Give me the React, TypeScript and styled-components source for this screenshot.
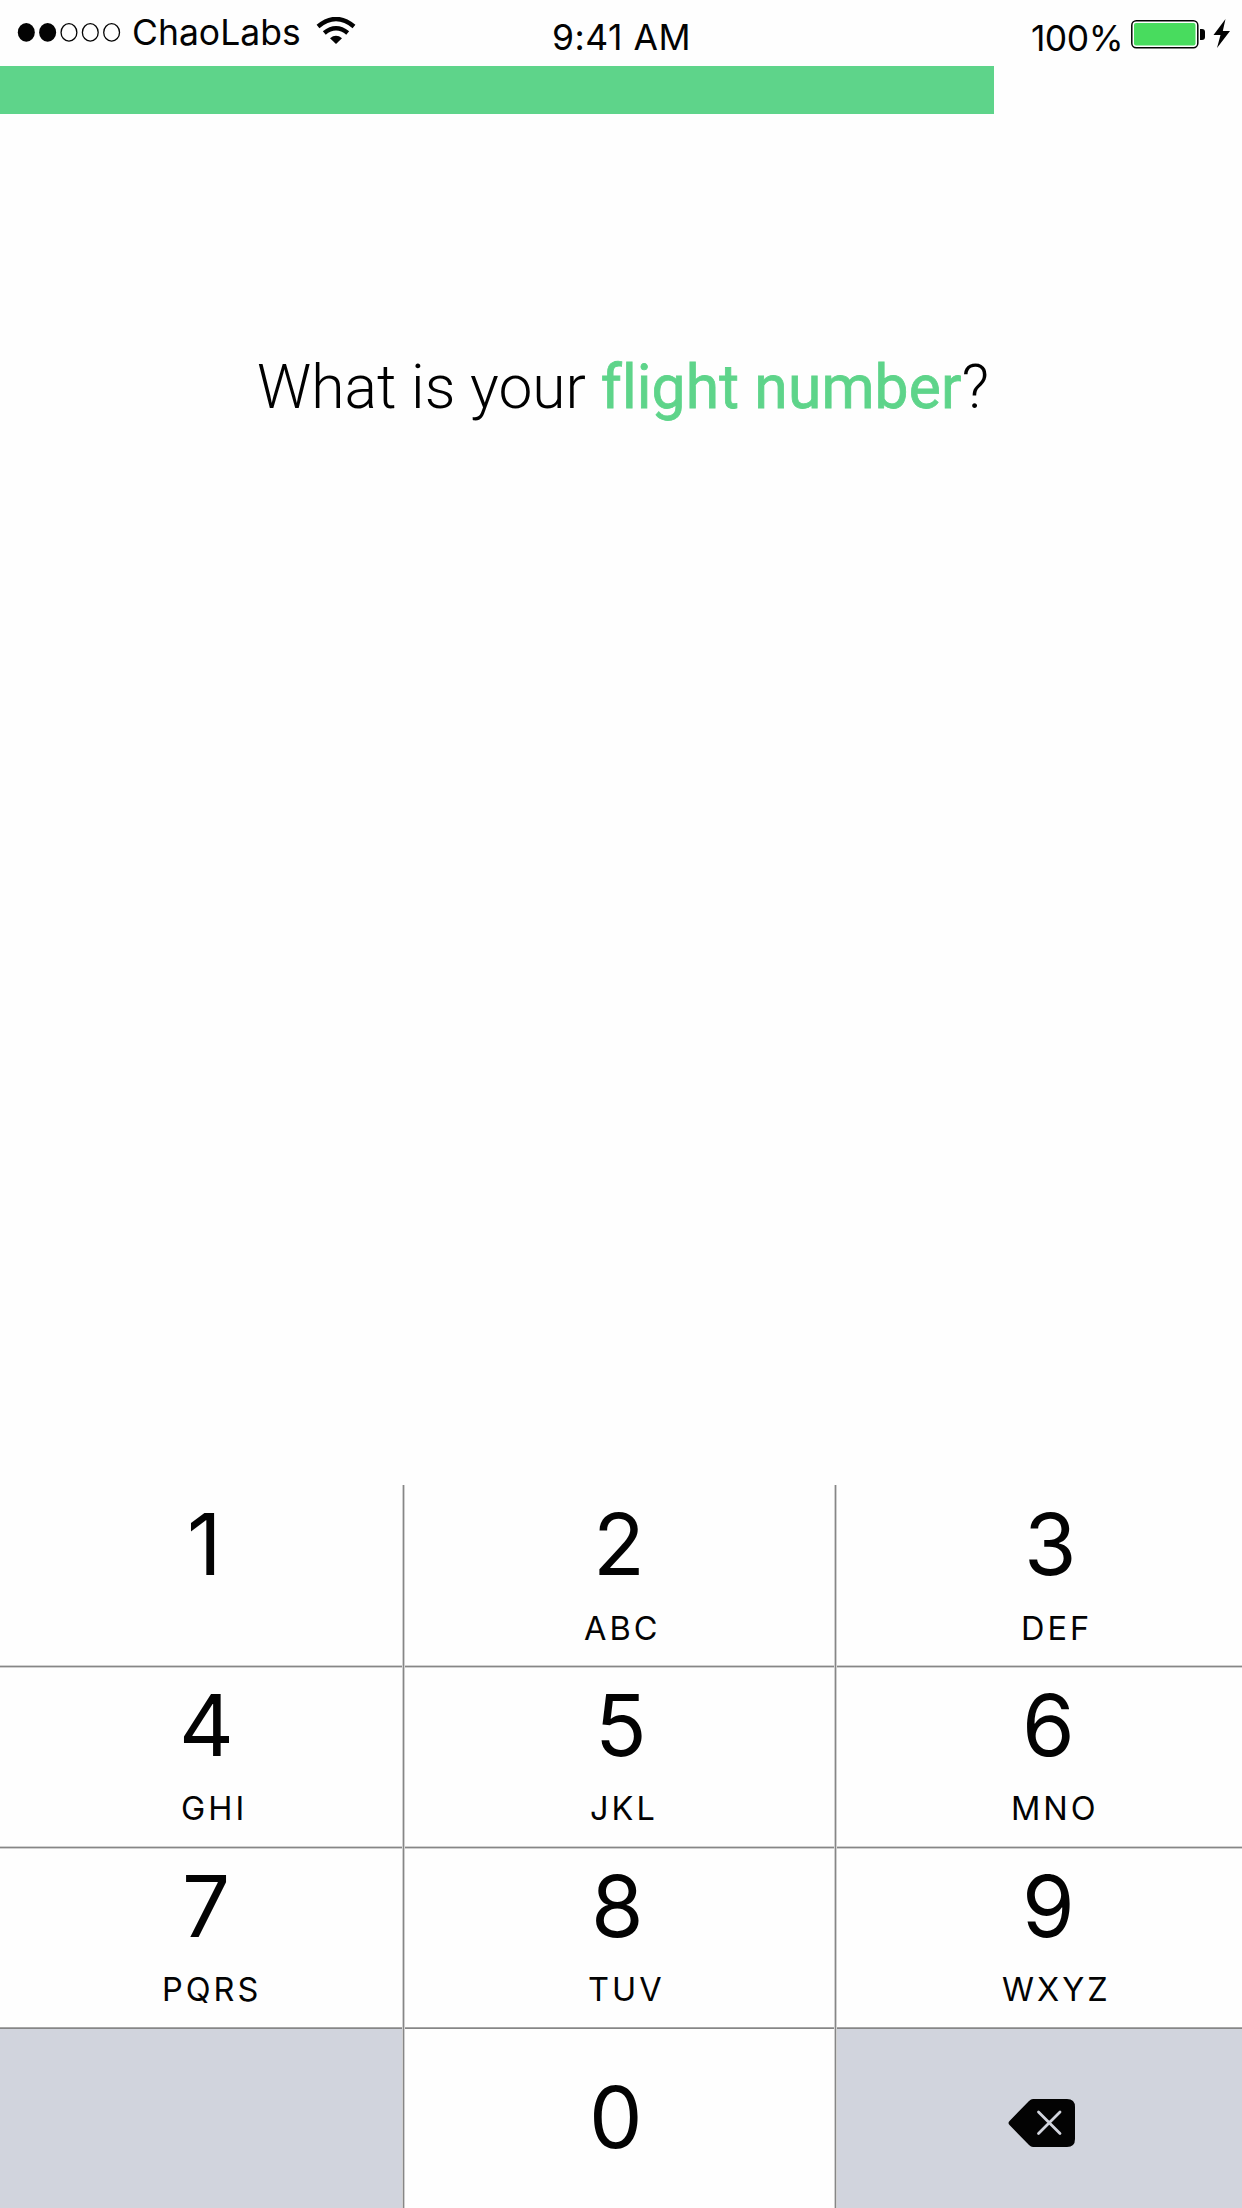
import React from "react";
import styled, { createGlobalStyle } from "styled-components";

const GlobalStyle = createGlobalStyle`
  html, body { margin: 0; padding: 0; background: #fefefe; }
  * { box-sizing: border-box; }
`;

const Screen = styled.main`
  width: 1242px;
  height: 2208px;
  display: flex;
  flex-direction: column;
  overflow: hidden;
  background: #fefefe;
  color: #030303;
  font-family: Inter, "Liberation Sans", sans-serif;
`;

const StatusBar = styled.header`
  height: 66px;
  flex: none;
  display: grid;
  grid-template-columns: 1fr auto 1fr;
  font-size: 35.5px;
  line-height: 44px;
`;

const StatusLeft = styled.div`
  display: flex;
  align-items: flex-start;
  padding: 10px 0 0 17px;
`;

const Signal = styled.svg`
  width: 105px;
  height: 20px;
  margin-top: 12px;
`;

const Carrier = styled.span`
  margin: 1px 0 0 10px;
  width: 168px;
  white-space: nowrap;
`;

const Wifi = styled.svg`
  width: 40px;
  height: 28px;
  margin: 7px 0 0 16px;
`;

const Clock = styled.time`
  padding: 16px 0 0 1px;
  letter-spacing: 0.5px;
  white-space: nowrap;
`;

const StatusRight = styled.div`
  display: flex;
  align-items: flex-start;
  justify-content: flex-end;
  padding: 15px 11px 0 0;
`;

const Charge = styled.span`
  margin-top: 2px;
  letter-spacing: -0.5px;
  white-space: nowrap;
`;

const Battery = styled.svg`
  width: 101px;
  height: 32px;
  margin: 3px 0 0 7px;
`;

const Track = styled.div`
  height: 48px;
  flex: none;
`;

const Progress = styled.div`
  height: 48px;
  width: 80%;
  background: #5ed48a;
`;

const Prompt = styled.section`
  flex: 1;
  padding-top: 237px;
`;

const Question = styled.h1`
  margin: 0 0 0 257px;
  font: 300 60.5px/74px Roboto, sans-serif;
  font-variant-ligatures: none;
  white-space: nowrap;
  color: #000;
`;

const Highlight = styled.span`
  font-weight: 400;
  letter-spacing: 0.15px;
  -webkit-text-stroke: 0.8px #5ed48a;
  color: #5ed48a;
`;

const Keypad = styled.section`
  height: 723px;
  flex: none;
  display: grid;
  grid-template-columns: 402px 3px 429px 3px 405px;
  grid-template-rows: 180px 3px 178px 3px 178px 2px 179px;
`;

const VLine = styled.i<{ $col: number }>`
  grid-column: ${(p) => p.$col};
  grid-row: 1 / -1;
  border: solid #d0d0d0;
  border-width: 0 1px;
  background: #868686;
`;

const HLine = styled.i<{ $row: number; $solid?: boolean }>`
  grid-row: ${(p) => p.$row};
  grid-column: 1 / -1;
  border: solid ${(p) => (p.$solid ? "#a6a6a6" : "#d0d0d0")};
  border-width: ${(p) => (p.$solid ? "1px 0 0" : "1px 0")};
  background: #868686;
`;

const Key = styled.button<{ $col: number; $row: number; $muted?: boolean }>`
  grid-column: ${(p) => p.$col * 2 + 1};
  grid-row: ${(p) => p.$row * 2 + 1};
  display: flex;
  flex-direction: column;
  align-items: flex-start;
  border: 0;
  margin: 0;
  padding: 0;
  color: #030303;
  font-family: inherit;
  text-align: left;
  background: ${(p) => (p.$muted ? "#d1d4dd" : "transparent")};
`;

const Digit = styled.span<{ $left: number; $top: number }>`
  margin: ${(p) => p.$top}px 0 0 ${(p) => p.$left}px;
  font-size: 85px;
  line-height: 90px;
  font-optical-sizing: none;
`;

const Letters = styled.span<{ $left: number; $gap: number }>`
  margin: ${(p) => p.$gap}px 0 0 ${(p) => p.$left}px;
  font-size: 32.5px;
  line-height: 36px;
  letter-spacing: 3px;
  white-space: nowrap;
`;

const DeleteIcon = styled.svg`
  width: 68px;
  height: 50px;
  margin: 69px 0 0 171px;
`;

type KeySpec = { digit: string; x: number; letters?: string; lx?: number };

const rows: KeySpec[][] = [
  [
    { digit: "1", x: 187 },
    { digit: "2", x: 188, letters: "ABC", lx: 179 },
    { digit: "3", x: 187, letters: "DEF", lx: 184 },
  ],
  [
    { digit: "4", x: 179, letters: "GHI", lx: 181 },
    { digit: "5", x: 190, letters: "JKL", lx: 185 },
    { digit: "6", x: 185, letters: "MNO", lx: 174 },
  ],
  [
    { digit: "7", x: 182, letters: "PQRS", lx: 162 },
    { digit: "8", x: 186, letters: "TUV", lx: 183 },
    { digit: "9", x: 185, letters: "WXYZ", lx: 165 },
  ],
];

export default function App() {
  return (
    <>
      <GlobalStyle />
      <Screen>
        <StatusBar>
          <StatusLeft>
            <Signal viewBox="0 0 105 20">
              {[0, 1, 2, 3, 4].map((i) => (
                <ellipse
                  key={i}
                  cx={9.3 + i * 21.33}
                  cy={10.4}
                  rx={i < 2 ? 8.5 : 7.9}
                  ry={i < 2 ? 9.3 : 8.7}
                  fill={i < 2 ? "#030303" : "none"}
                  stroke={i < 2 ? "none" : "#030303"}
                  strokeWidth="1.3"
                />
              ))}
            </Signal>
            <Carrier>ChaoLabs</Carrier>
            <Wifi viewBox="0 0 40 28" fill="none" stroke="#030303">
              <path d="M2 9.5 Q20 -5.5 38 9.5" strokeWidth="4.4" />
              <path d="M8.3 16 Q20 6.5 31.7 16" strokeWidth="4.6" />
              <path d="M14 21.2 Q20 16.4 26 21.2 L20 27 Z" fill="#030303" stroke="none" />
            </Wifi>
          </StatusLeft>
          <Clock>9:41 AM</Clock>
          <StatusRight>
            <Charge>100%</Charge>
            <Battery viewBox="0 0 101 32">
              <rect x="1.8" y="2.8" width="66" height="27" rx="4.5" fill="#fff" stroke="#030303" strokeWidth="1.5" />
              <rect x="4" y="5" width="61.5" height="22.6" rx="2" fill="#48dc5e" />
              <path d="M70 11h2q3 0 3 3v5q0 3-3 3h-2z" fill="#030303" />
              <path d="M95.5 1 83.5 17h7L87 30l13-17h-7.2z" fill="#030303" />
            </Battery>
          </StatusRight>
        </StatusBar>
        <Track>
          <Progress />
        </Track>
        <Prompt>
          <Question>
            What is your <Highlight>flight number</Highlight>?
          </Question>
        </Prompt>
        <Keypad>
          {rows.map((row, r) =>
            row.map((k, c) => (
              <Key key={k.digit} $col={c} $row={r}>
                <Digit $left={k.x} $top={r === 0 ? 15 : 13}>{k.digit}</Digit>
                {k.letters && (
                  <Letters $left={k.lx ?? 0} $gap={r === 0 ? 21 : 20}>{k.letters}</Letters>
                )}
              </Key>
            ))
          )}
          <Key $col={0} $row={3} $muted />
          <Key $col={1} $row={3}>
            <Digit $left={184} $top={44}>0</Digit>
          </Key>
          <Key $col={2} $row={3} $muted aria-label="Delete">
            <DeleteIcon viewBox="0 0 68 50">
              <path d="M25 1h34q8 0 8 8v32q0 8-8 8H25q-2 0-4-2L1.5 27q-2-2 0-4L21 3q2-2 4-2z" fill="#030303" />
              <path d="m30.5 14 21.5 21.5M52 14 30.5 35.5" stroke="#d1d4dd" strokeWidth="2.8" strokeLinecap="round" />
            </DeleteIcon>
          </Key>
          <HLine $row={2} />
          <HLine $row={4} />
          <HLine $row={6} $solid />
          <VLine $col={2} />
          <VLine $col={4} />
        </Keypad>
      </Screen>
    </>
  );
}
